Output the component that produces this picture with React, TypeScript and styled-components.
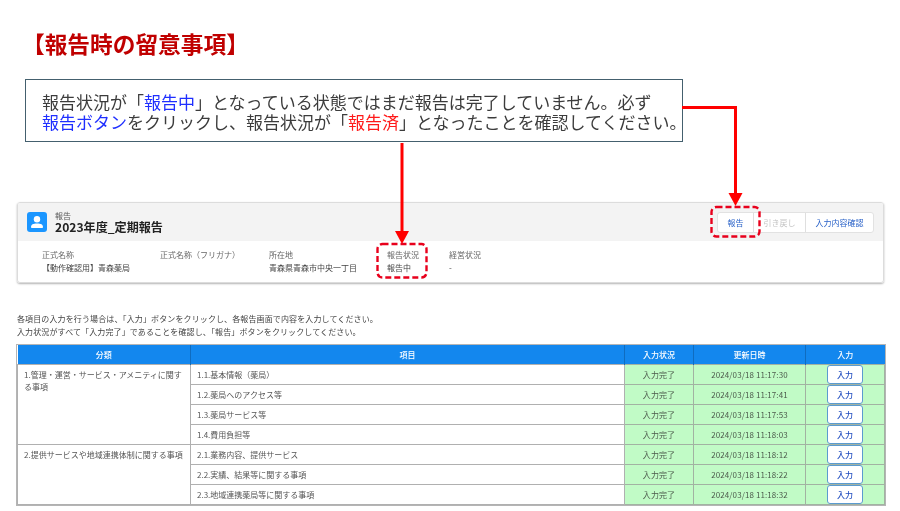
import styled, { createGlobalStyle } from "styled-components";

const GlobalStyle = createGlobalStyle`
  html, body {
    margin: 0;
    padding: 0;
    background: #fff;
  }
  body {
    font-family: "Noto Sans CJK JP", "Noto Sans", sans-serif;
  }
`;

const Page = styled.div`
  position: relative;
  width: 900px;
  height: 511px;
  overflow: hidden;
  background: #fff;
  padding: 31px 16px 0 17px;
  box-sizing: border-box;
  filter: blur(0.25px);
`;

const Title = styled.h1`
  margin: 0 0 0 5px;
  font-size: 22.7px;
  line-height: 26px;
  font-weight: 700;
  color: #c00000;
`;

const Callout = styled.div`
  box-sizing: border-box;
  width: 658px;
  height: 63px;
  margin: 22px 0 60px 8px;
  padding: 12px 0 0 16px;
  border: 1px solid #44606e;
  font-size: 17px;
  line-height: 20px;
  color: #3c3c3c;
  white-space: nowrap;
`;

const Mark = styled.span<{ $tone: "blue" | "red" }>`
  color: ${({ $tone }) => ($tone === "blue" ? "#1f2fff" : "#ff1a1a")};
`;

const Blurred = styled.div`
  filter: blur(0.3px);
`;

const Card = styled.section`
  box-sizing: border-box;
  width: 867px;
  height: 81px;
  border: 1px solid #dcdcdc;
  border-radius: 3px;
  box-shadow: 0 1px 2px rgba(0, 0, 0, 0.3);
  overflow: hidden;
`;

const CardHead = styled.header`
  display: flex;
  align-items: center;
  height: 38px;
  padding: 0 9px 0 9px;
  background: #f3f3f3;
`;

const IconTile = styled.div`
  width: 20px;
  height: 20px;
  border-radius: 3px;
  background: #1b96ff;
  margin-right: 8px;
  flex: none;
  svg {
    display: block;
  }
`;

const Heading = styled.div`
  flex: 1;
  color: #222;
`;

const Eyebrow = styled.div`
  font-size: 8px;
  line-height: 9px;
  color: #555;
`;

const RecordName = styled.div`
  font-size: 12.1px;
  line-height: 14px;
  font-weight: 700;
`;

const ButtonGroup = styled.div`
  display: flex;
  height: 19px;
  border: 1px solid #e2e2e2;
  border-radius: 3px;
  background: #fff;
  margin-top: 1px;
`;

const GroupButton = styled.button<{ $width: number; $disabled?: boolean }>`
  box-sizing: border-box;
  width: ${({ $width }) => $width}px;
  padding: 0;
  border: 0;
  border-left: 1px solid #dfdfdf;
  background: transparent;
  font: inherit;
  font-size: 8px;
  color: ${({ $disabled }) => ($disabled ? "#c4c4c4" : "#2a62c8")};
  &:first-child {
    border-left: 0;
  }
`;

const Details = styled.dl`
  display: flex;
  margin: 0;
  padding: 7px 0 0 24px;
`;

const Detail = styled.div<{ $width: number }>`
  width: ${({ $width }) => $width}px;
  flex: none;
`;

const DetailLabel = styled.dt`
  font-size: 8px;
  line-height: 13px;
  color: #666;
`;

const DetailValue = styled.dd`
  margin: 0;
  font-size: 8px;
  line-height: 13px;
  color: #444;
`;

const Note = styled.p`
  margin: 29px 0 7px;
  font-size: 8px;
  line-height: 13px;
  letter-spacing: 0.12px;
  color: #444;
`;

const Table = styled.table`
  width: 867px;
  table-layout: fixed;
  border-collapse: collapse;
  font-size: 8px;
  color: #555;
  outline: 1px solid #b5b5b5;
`;

const HeadCell = styled.th<{ $width: number }>`
  box-sizing: border-box;
  width: ${({ $width }) => $width}px;
  height: 19px;
  padding: 0;
  background: #1387ee;
  color: #fff;
  font-weight: 500;
  border-left: 1px solid #0f6cc0;
  &:first-child {
    border-left: 0;
  }
`;

const Cell = styled.td`
  box-sizing: border-box;
  height: 20px;
  padding: 0 6px;
  border: 1px solid #b0b0b0;
  background: #fff;
`;

const GroupCell = styled(Cell)`
  vertical-align: top;
  padding-top: 4px;
  line-height: 12px;
`;

const StatusCell = styled.td`
  box-sizing: border-box;
  height: 20px;
  padding: 0;
  border: 1px solid #a2b2a2;
  background: #c1fbc6;
  color: #4c5a4c;
  text-align: center;
  letter-spacing: 0.1px;
`;

const InputButton = styled.button`
  display: block;
  box-sizing: border-box;
  width: 36px;
  height: 19px;
  margin: 0 0 0 21px;
  padding: 0;
  border: 1px solid #5b9bd0;
  border-radius: 3px;
  background: #fff;
  color: #2450c0;
  font: inherit;
  font-weight: 500;
`;

const Annotations = styled.svg`
  position: absolute;
  left: 0;
  top: 0;
  pointer-events: none;
`;

const details = [
  { label: "正式名称", value: "【動作確認用】青森薬局", width: 118 },
  { label: "正式名称（フリガナ）", value: "", width: 109 },
  { label: "所在地", value: "青森県青森市中央一丁目", width: 118 },
  { label: "報告状況", value: "報告中", width: 62 },
  { label: "経営状況", value: "-", width: 80 },
];

const groups = [
  {
    name: "1.管理・運営・サービス・アメニティに関する事項",
    rows: [
      { item: "1.1.基本情報（薬局）", updated: "2024/03/18 11:17:30" },
      { item: "1.2.薬局へのアクセス等", updated: "2024/03/18 11:17:41" },
      { item: "1.3.薬局サービス等", updated: "2024/03/18 11:17:53" },
      { item: "1.4.費用負担等", updated: "2024/03/18 11:18:03" },
    ],
  },
  {
    name: "2.提供サービスや地域連携体制に関する事項",
    rows: [
      { item: "2.1.業務内容、提供サービス", updated: "2024/03/18 11:18:12" },
      { item: "2.2.実績、結果等に関する事項", updated: "2024/03/18 11:18:22" },
      { item: "2.3.地域連携薬局等に関する事項", updated: "2024/03/18 11:18:32" },
    ],
  },
];

const App = () => {
  return (
    <Page>
      <GlobalStyle />
      <Title>【報告時の留意事項】</Title>
      <Callout>
        報告状況が「<Mark $tone="blue">報告中</Mark>」となっている状態ではまだ報告は完了していません。必ず
        <br />
        <Mark $tone="blue">報告ボタン</Mark>をクリックし、報告状況が「<Mark $tone="red">報告済</Mark>」となったことを確認してください。
      </Callout>

      <Blurred>
        <Card>
          <CardHead>
            <IconTile>
              <svg width="20" height="20" viewBox="0 0 20 20">
                <circle cx="10" cy="7.2" r="3.2" fill="#fff" />
                <path d="M4 15.2c0-2.6 2.2-3.6 6-3.6s6 1 6 3.6c0 .5-.4.8-.8.8H4.8c-.4 0-.8-.3-.8-.8z" fill="#fff" />
              </svg>
            </IconTile>
            <Heading>
              <Eyebrow>報告</Eyebrow>
              <RecordName>2023年度_定期報告</RecordName>
            </Heading>
            <ButtonGroup>
              <GroupButton $width={35}>報告</GroupButton>
              <GroupButton $width={52} $disabled>引き戻し</GroupButton>
              <GroupButton $width={68}>入力内容確認</GroupButton>
            </ButtonGroup>
          </CardHead>
          <Details>
            {details.map((d) => (
              <Detail key={d.label} $width={d.width}>
                <DetailLabel>{d.label}</DetailLabel>
                <DetailValue>{d.value}</DetailValue>
              </Detail>
            ))}
          </Details>
        </Card>

        <Note>
          各項目の入力を行う場合は、「入力」ボタンをクリックし、各報告画面で内容を入力してください。
          <br />
          入力状況がすべて「入力完了」であることを確認し、「報告」ボタンをクリックしてください。
        </Note>

        <Table>
          <thead>
            <tr>
              <HeadCell $width={173}>分類</HeadCell>
              <HeadCell $width={434}>項目</HeadCell>
              <HeadCell $width={69}>入力状況</HeadCell>
              <HeadCell $width={112}>更新日時</HeadCell>
              <HeadCell $width={79}>入力</HeadCell>
            </tr>
          </thead>
          <tbody>
            {groups.map((g) =>
              g.rows.map((r, i) => (
                <tr key={r.item}>
                  {i === 0 && <GroupCell rowSpan={g.rows.length}>{g.name}</GroupCell>}
                  <Cell>{r.item}</Cell>
                  <StatusCell>入力完了</StatusCell>
                  <StatusCell>{r.updated}</StatusCell>
                  <StatusCell>
                    <InputButton>入力</InputButton>
                  </StatusCell>
                </tr>
              ))
            )}
          </tbody>
        </Table>
      </Blurred>

      <Annotations width="900" height="511" viewBox="0 0 900 511">
        <path d="M682 107.5H735.5V194" fill="none" stroke="#ff0000" strokeWidth="3" />
        <path d="M728.5 193H742.5L735.5 206Z" fill="#ff0000" />
        <path d="M402 143V232" fill="none" stroke="#ff0000" strokeWidth="3" />
        <path d="M395 231H409L402 244Z" fill="#ff0000" />
        <rect x="711.5" y="207" width="48" height="29.5" rx="5" fill="none" stroke="#e8001c" strokeWidth="2.4" strokeDasharray="6 3" />
        <rect x="377.5" y="244" width="49" height="33.5" rx="5" fill="none" stroke="#e8001c" strokeWidth="2.4" strokeDasharray="6 3" />
      </Annotations>
    </Page>
  );
};

export default App;
